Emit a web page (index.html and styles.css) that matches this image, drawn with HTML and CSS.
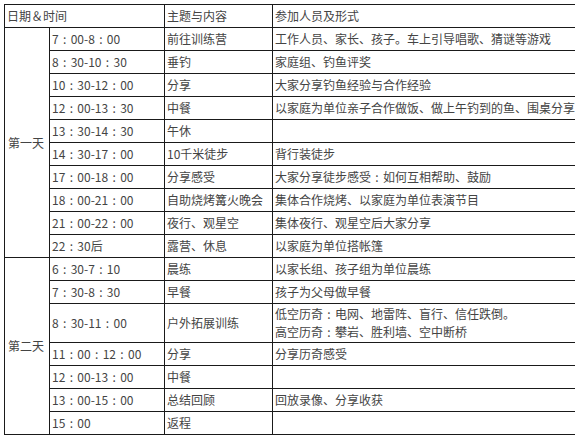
FILE: index.html
```html
<!DOCTYPE html>
<html lang="zh-CN">
<head>
<meta charset="utf-8">
<link rel="stylesheet" href="styles.css">
</head>
<body>
<table class="plan">
  <colgroup>
    <col class="c-day"><col class="c-time"><col class="c-topic"><col class="c-who">
  </colgroup>
  <tr><td colspan="2">日期＆时间</td><td>主题与内容</td><td class="last">参加人员及形式</td></tr>
  <tr><td class="day" rowspan="10">第一天</td><td>7<span class="c">:</span>00-8<span class="c">:</span>00</td><td>前往训练营</td><td class="last">工作人员、家长、孩子。车上引导唱歌、猜谜等游戏</td></tr>
  <tr><td>8<span class="c">:</span>30-10<span class="c">:</span>30</td><td>垂钓</td><td class="last">家庭组、钓鱼评奖</td></tr>
  <tr><td>10<span class="c">:</span>30-12<span class="c">:</span>00</td><td>分享</td><td class="last">大家分享钓鱼经验与合作经验</td></tr>
  <tr><td>12<span class="c">:</span>00-13<span class="c">:</span>30</td><td>中餐</td><td class="last">以家庭为单位亲子合作做饭、做上午钓到的鱼、围桌分享</td></tr>
  <tr><td>13<span class="c">:</span>30-14<span class="c">:</span>30</td><td>午休</td><td class="last"></td></tr>
  <tr><td>14<span class="c">:</span>30-17<span class="c">:</span>00</td><td>10千米徒步</td><td class="last">背行装徒步</td></tr>
  <tr><td>17<span class="c">:</span>00-18<span class="c">:</span>00</td><td>分享感受</td><td class="last">大家分享徒步感受<span class="c">:</span>如何互相帮助、鼓励</td></tr>
  <tr><td>18<span class="c">:</span>00-21<span class="c">:</span>00</td><td>自助烧烤篝火晚会</td><td class="last">集体合作烧烤、以家庭为单位表演节目</td></tr>
  <tr><td>21<span class="c">:</span>00-22<span class="c">:</span>00</td><td>夜行、观星空</td><td class="last">集体夜行、观星空后大家分享</td></tr>
  <tr><td>22<span class="c">:</span>30后</td><td>露营、休息</td><td class="last">以家庭为单位搭帐篷</td></tr>
  <tr><td class="day" rowspan="7">第二天</td><td>6<span class="c">:</span>30-7<span class="c">:</span>10</td><td>晨练</td><td class="last">以家长组、孩子组为单位晨练</td></tr>
  <tr><td>7<span class="c">:</span>30-8<span class="c">:</span>30</td><td>早餐</td><td class="last">孩子为父母做早餐</td></tr>
  <tr class="tall"><td>8<span class="c">:</span>30-11<span class="c">:</span>00</td><td>户外拓展训练</td><td class="last">低空历奇<span class="c">:</span>电网、地雷阵、盲行、信任跌倒。<br>高空历奇<span class="c">:</span>攀岩、胜利墙、空中断桥</td></tr>
  <tr><td>11<span class="c">:</span>00<span class="c">:</span>12<span class="c">:</span>00</td><td>分享</td><td class="last">分享历奇感受</td></tr>
  <tr><td>12<span class="c">:</span>00-13<span class="c">:</span>00</td><td>中餐</td><td class="last"></td></tr>
  <tr><td>13<span class="c">:</span>00-15<span class="c">:</span>00</td><td>总结回顾</td><td class="last">回放录像、分享收获</td></tr>
  <tr><td>15<span class="c">:</span>00</td><td>返程</td><td class="last"></td></tr>
</table>
</body>
</html>
```

FILE: styles.css
```css
html, body {
  margin: 0;
  background: #fff;
}
body {
  padding: 4px;
  font-family: "Noto Sans CJK SC", "Noto Sans", sans-serif;
  font-size: 12px;
  color: #444;
}
.plan {
  border-collapse: collapse;
  table-layout: fixed;
  width: 570px;
}
.c-day { width: 45px; }
.c-time { width: 115px; }
.c-topic { width: 108px; }
.c-who { width: 302px; }
.plan td {
  border: 1px solid #1a1a1a;
  padding: 2px 3px 2px 2px;
  height: 18px;
  line-height: 18px;
  white-space: nowrap;
  vertical-align: middle;
  overflow: visible;
}
.plan td.last {
  border-right: none;
}
.plan td.day {
  padding-left: 3px;
}
.plan .c {
  display: inline-block;
  width: 12px;
  text-align: center;
}
.plan tr.tall td {
  padding-top: 1px;
  padding-bottom: 1px;
  height: 36px;
}
```
